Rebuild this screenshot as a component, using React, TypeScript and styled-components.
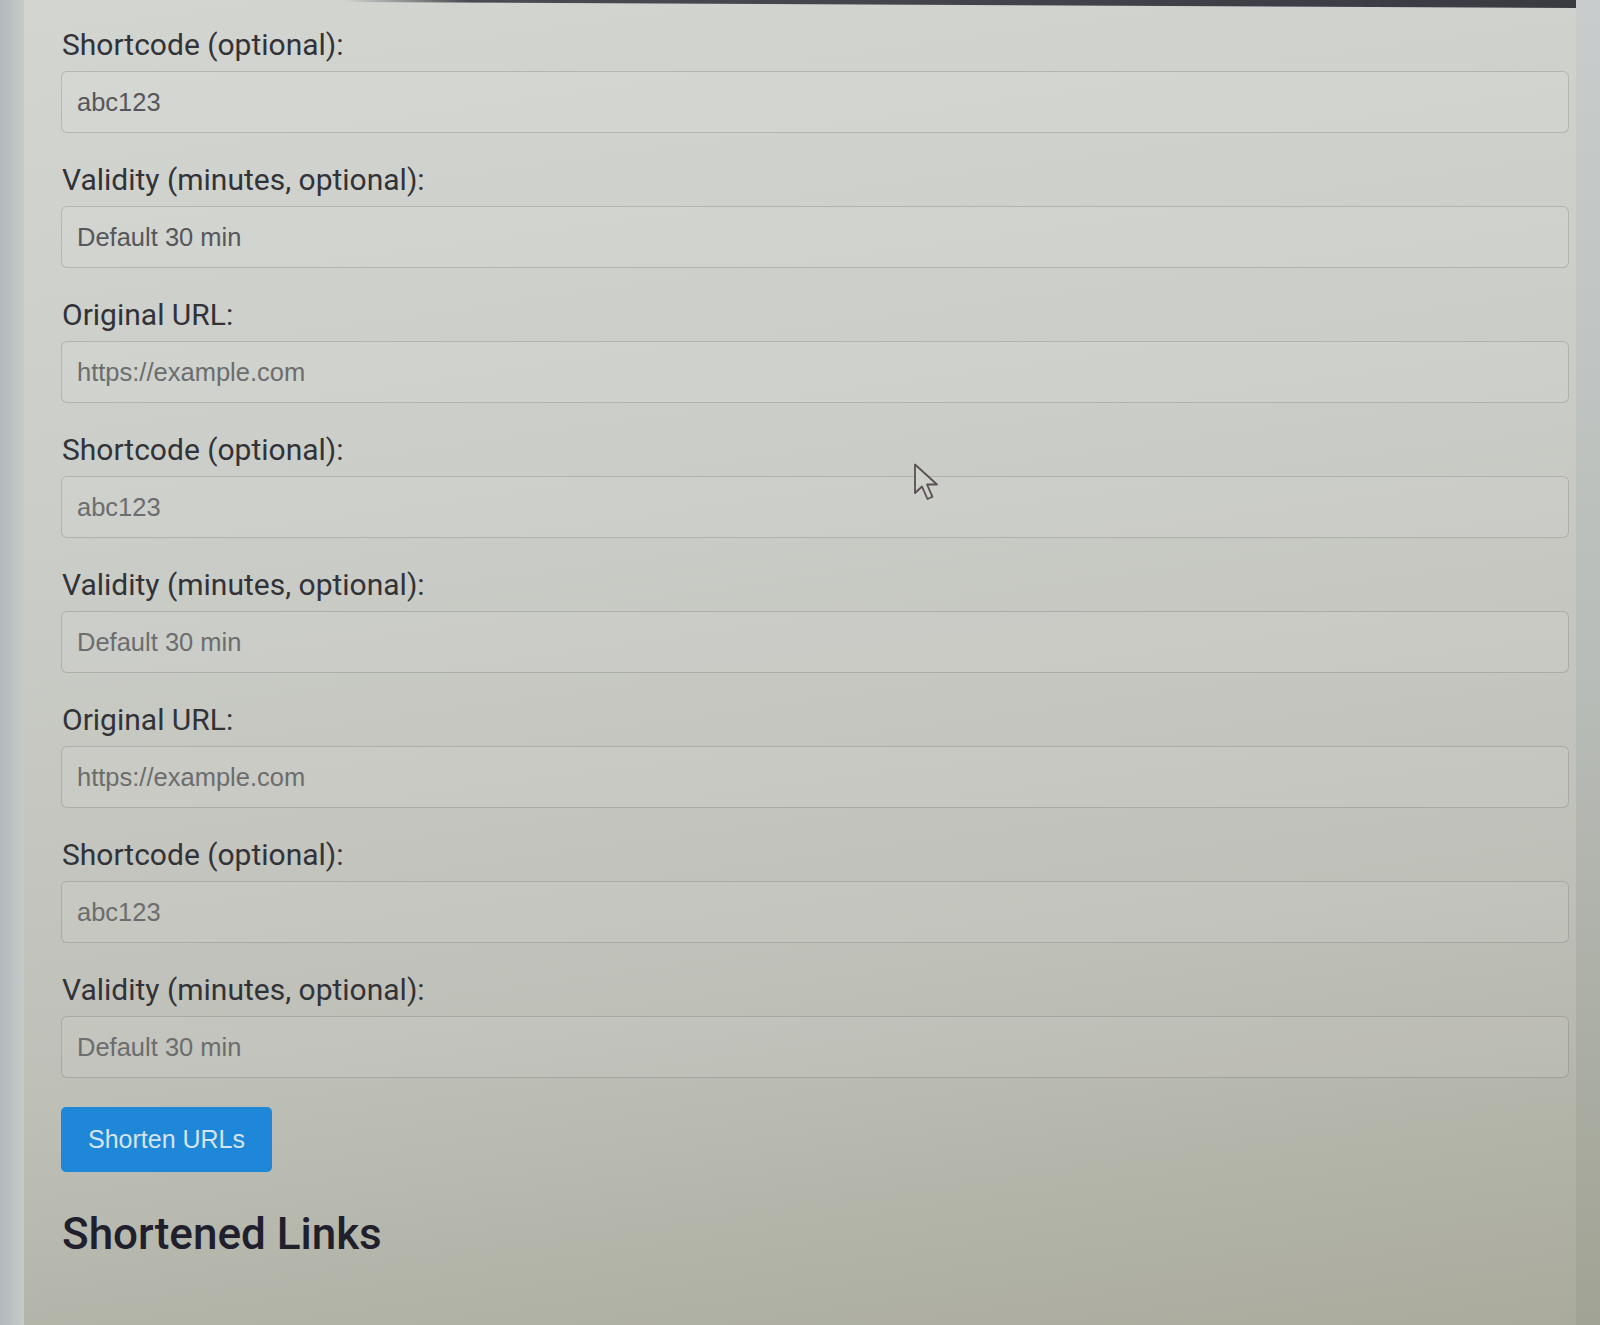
import React from "react";
import styled, { createGlobalStyle } from "styled-components";

const Global = createGlobalStyle`
  html, body {
    margin: 0;
    padding: 0;
    background: #b4babb;
  }
  #root {
    min-height: 1325px;
  }
`;

const Screen = styled.div`
  display: flex;
  width: 1600px;
  height: 1325px;
  overflow: hidden;
  background: linear-gradient(180deg, #bcc3c6 0%, #b6bcbb 50%, #a8ab9f 100%);
`;

const LeftEdge = styled.div`
  width: 24px;
  flex: none;
  background: linear-gradient(90deg, #b2b9bd 0%, #c2c7c6 80%, #c8cbc6 100%);
`;

const RightEdge = styled.div`
  width: 24px;
  flex: none;
  background: linear-gradient(180deg, #c8cccc 0%, #b9bdb9 50%, #a1a394 100%);
`;

const Card = styled.main`
  position: relative;
  flex: 1;
  display: flex;
  flex-direction: column;
  padding: 28px 7px 0 37px;
  background: linear-gradient(172deg, #d3d5d1 0%, #cbcdc8 35%, #bfc0b8 70%, #aaab9d 100%);
`;

const TopBar = styled.div`
  position: absolute;
  top: 0;
  left: 320px;
  right: 0;
  height: 8px;
  clip-path: polygon(0 0, 100% 0, 100% 100%, 0 25%);
  background: linear-gradient(90deg, rgba(58, 59, 66, 0) 0%, #4a4b52 10%, #3a3b42 100%);
`;

const Field = styled.div`
  display: flex;
  flex-direction: column;
  gap: 9px;
  margin-bottom: 30px;
`;

const Label = styled.label`
  font-family: Roboto, "Liberation Sans", sans-serif;
  font-size: 30px;
  line-height: 34px;
  font-weight: 400;
  color: #323338;
  padding-left: 1px;
`;

const Input = styled.input<{ $dark?: boolean }>`
  box-sizing: border-box;
  height: 62px;
  width: 100%;
  padding: 0 15px;
  border: 1.5px solid rgba(70, 72, 68, 0.22);
  border-radius: 6px;
  background: rgba(255, 255, 255, 0.07);
  font-family: "Liberation Sans", Arial, sans-serif;
  font-size: 25.5px;
  color: #5e6062;
  outline: none;
  &::placeholder {
    color: ${(p) => (p.$dark ? "#55575a" : "#6b6d6e")};
    opacity: 1;
  }
`;

const Button = styled.button`
  align-self: flex-start;
  height: 65px;
  padding: 0 27px;
  margin-top: -1px;
  border: none;
  border-radius: 5px;
  background: #1f87d8;
  color: #d6e4ef;
  font-family: "Liberation Sans", Arial, sans-serif;
  font-size: 25px;
  cursor: pointer;
`;

const Heading = styled.h2`
  margin: 36px 0 0 1px;
  font-family: Roboto, "Liberation Sans", sans-serif;
  font-size: 44px;
  line-height: 52px;
  font-weight: 500;
  color: #20202d;
`;

const Cursor = styled.svg`
  position: absolute;
  left: 889px;
  top: 463px;
  width: 28px;
  height: 40px;
  pointer-events: none;
`;

const fields = [
  { label: "Shortcode (optional):", ph: "abc123", dark: true },
  { label: "Validity (minutes, optional):", ph: "Default 30 min", dark: true },
  { label: "Original URL:", ph: "https://example.com" },
  { label: "Shortcode (optional):", ph: "abc123" },
  { label: "Validity (minutes, optional):", ph: "Default 30 min" },
  { label: "Original URL:", ph: "https://example.com" },
  { label: "Shortcode (optional):", ph: "abc123" },
  { label: "Validity (minutes, optional):", ph: "Default 30 min" },
];

export default function App() {
  return (
    <>
      <Global />
      <Screen>
        <LeftEdge />
        <Card>
          <TopBar />
          {fields.map((f, i) => (
            <Field key={i}>
              <Label htmlFor={`f${i}`}>{f.label}</Label>
              <Input id={`f${i}`} placeholder={f.ph} $dark={f.dark} />
            </Field>
          ))}
          <Button>Shorten URLs</Button>
          <Heading>Shortened Links</Heading>
          <Cursor viewBox="0 0 28 40">
            <path
              d="M2 1.5 L2 30 L9 23.5 L14.5 36 L19.5 33.8 L14 21.5 L24 21.5 Z"
              fill="#cfd1cc"
              stroke="#5a4f52"
              strokeWidth="1.8"
              strokeLinejoin="round"
            />
          </Cursor>
        </Card>
        <RightEdge />
      </Screen>
    </>
  );
}
